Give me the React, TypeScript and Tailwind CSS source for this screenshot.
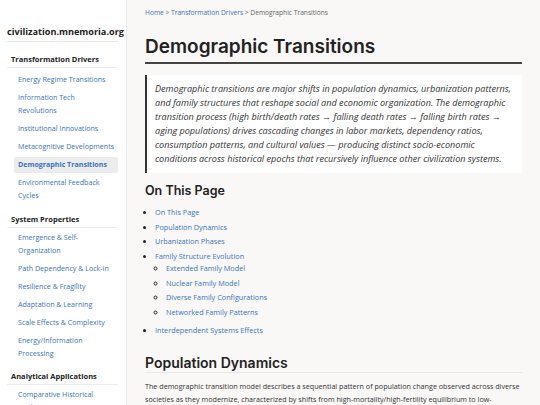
import React from "react";

const link = "text-[#3b73b9]";

type Item = { label: React.ReactNode; key: string; active?: boolean };

function SideGroup({ title, items, first }: { title: string; items: Item[]; first?: boolean }) {
  return (
    <div className={first ? "mt-[11px]" : "mt-[9px]"}>
      <div className="text-[7.5px] font-bold text-[#222] pl-[4px] pb-[2px] border-b border-[#ececec] leading-[12px] whitespace-nowrap">{title}</div>
      <ul className={`${first ? "mt-[3.5px]" : "mt-[1.5px]"} flex flex-col gap-[2px]`}>
        {items.map((it) => (
          <li
            key={it.key}
            className={`pl-[4px] pr-[3px] py-[1.5px] ml-[7px] rounded-[2px] text-[7.1px] leading-[13px] ${link} ${it.active ? "bg-[#ececec] font-bold" : ""}`}
          >
            {it.label}
          </li>
        ))}
      </ul>
    </div>
  );
}

export default function App() {
  return (
    <div className="flex w-[540px] h-[405px] overflow-hidden bg-[#f9f8f7]" style={{ fontFamily: '"Open Sans", sans-serif' }}>
      <aside className="w-[127px] shrink-0 bg-white border-r border-[#ebebeb] pl-[7px] pr-[8px] pt-[24px]">
        <div className="text-[9.15px] font-bold text-[#222] pb-[1px] border-b border-[#e6e6e6] leading-[16px] whitespace-nowrap">
          civilization.mnemoria.org
        </div>
        <SideGroup
          first
          title="Transformation Drivers"
          items={[
            { key: "a", label: "Energy Regime Transitions" },
            { key: "b", label: <>Information Tech<br />Revolutions</> },
            { key: "c", label: "Institutional Innovations" },
            { key: "d", label: "Metacognitive Developments" },
            { key: "e", label: "Demographic Transitions", active: true },
            { key: "f", label: <>Environmental Feedback<br />Cycles</> },
          ]}
        />
        <SideGroup
          title="System Properties"
          items={[
            { key: "a", label: <>Emergence &amp; Self-<br />Organization</> },
            { key: "b", label: "Path Dependency & Lock-In" },
            { key: "c", label: "Resilience & Fragility" },
            { key: "d", label: "Adaptation & Learning" },
            { key: "e", label: "Scale Effects & Complexity" },
            { key: "f", label: <>Energy/Information<br />Processing</> },
          ]}
        />
        <SideGroup title="Analytical Applications" items={[{ key: "a", label: <>Comparative Historical<br />Analysis</> }]} />
      </aside>
      <main className="flex-1 pl-[18px] pr-[18px] pt-[8px]">
        <div className="text-[6.65px] text-[#666] leading-[10px]">
          <span className={link}>Home</span> &gt; <span className={link}>Transformation Drivers</span> &gt; Demographic Transitions
        </div>
        <h1
          className="mt-[17px] text-[19px] font-semibold text-[#222] leading-[24px] pb-[3px] border-b-2 border-[#444]"
          style={{ fontFamily: '"Inter", sans-serif' }}
        >
          Demographic Transitions
        </h1>
        <blockquote className="mt-[11px] bg-white border-l-2 border-[#333] pl-[8px] pr-[6px] py-[7px] italic text-[9.1px] leading-[14px] text-[#333]">
          Demographic transitions are major shifts in population dynamics, urbanization patterns, and family structures that reshape social and economic organization. The demographic transition process (high birth/death rates → falling death rates → falling birth rates → aging populations) drives cascading changes in labor markets, dependency ratios, consumption patterns, and cultural values — producing distinct socio-economic conditions across historical epochs that recursively influence other civilization systems.
        </blockquote>
        <h2 className="mt-[10px] text-[12.5px] font-semibold text-[#222] leading-[16px]" style={{ fontFamily: '"Inter", sans-serif' }}>
          On This Page
        </h2>
        <ul className="mt-[6px] list-disc pl-[10px] text-[7.3px] leading-[14.5px] marker:text-[#222]">
          <li className={link}>On This Page</li>
          <li className={link}>Population Dynamics</li>
          <li className={link}>Urbanization Phases</li>
          <li className={link}>
            Family Structure Evolution
            <ul className="list-[circle] pl-[11px] pb-[4px] -mt-[2px]">
              <li>Extended Family Model</li>
              <li>Nuclear Family Model</li>
              <li>Diverse Family Configurations</li>
              <li>Networked Family Patterns</li>
            </ul>
          </li>
          <li className={link}>Interdependent Systems Effects</li>
        </ul>
        <h2
          className="mt-[17px] text-[14px] font-semibold text-[#222] leading-[16px] pb-[1px] border-b border-[#e8e8e8]"
          style={{ fontFamily: '"Inter", sans-serif' }}
        >
          Population Dynamics
        </h2>
        <p className="mt-[7px] text-[7.2px] leading-[13px] text-[#333]">
          The demographic transition model describes a sequential pattern of population change observed across diverse societies as they modernize, characterized by shifts from high-mortality/high-fertility equilibrium to low-mortality/low-fertility equilibrium.
        </p>
      </main>
    </div>
  );
}
